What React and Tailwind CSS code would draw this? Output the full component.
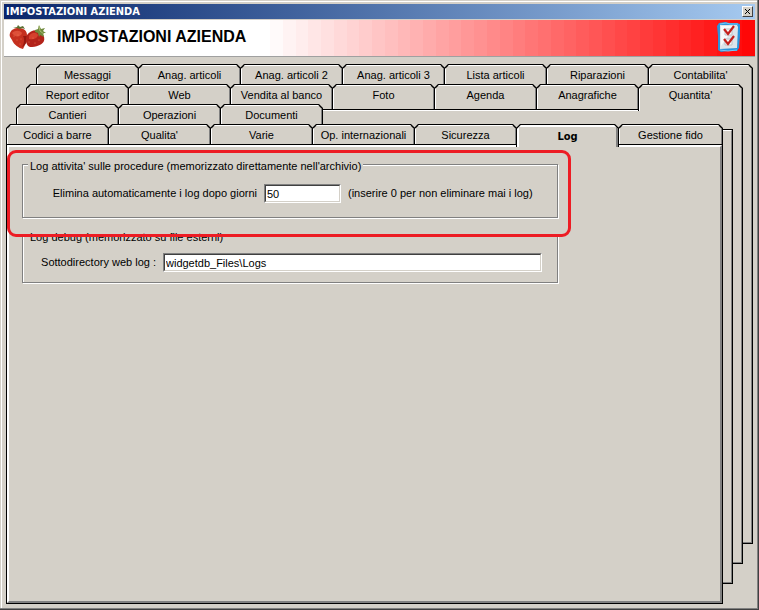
import React from "react";

const backTabs = [
  "Messaggi",
  "Anag. articoli",
  "Anag. articoli 2",
  "Anag. articoli 3",
  "Lista articoli",
  "Riparazioni",
  "Contabilita'",
];
const secondTabs = [
  "Report editor",
  "Web",
  "Vendita al banco",
  "Foto",
  "Agenda",
  "Anagrafiche",
  "Quantita'",
];
const thirdTabs = ["Cantieri", "Operazioni", "Documenti"];
const frontTabs = [
  "Codici a barre",
  "Qualita'",
  "Varie",
  "Op. internazionali",
  "Sicurezza",
  "Log",
  "Gestione fido",
];

const bands = Array.from({ length: 38 }, (_, i) =>
  Math.round(250 * (1 - i / 38))
);

const chamfer =
  "[clip-path:polygon(0_100%,0_4px,4px_0,calc(100%-4px)_0,100%_4px,100%_100%)]";

const boldFont = "font-['DejaVu_Sans_Condensed',Tahoma,sans-serif] font-bold";

function Tab({ label, active, open, grow, closed }) {
  return (
    <button
      type="button"
      role="tab"
      aria-selected={!!active}
      className={`${chamfer} flex bg-black px-px pt-px ${
        grow ? "min-w-0 grow" : "-mr-px w-[103px]"
      } ${active || open ? "z-10 -mb-[2px]" : ""} ${closed ? "pb-px" : ""}`}
    >
      <span
        className={`${chamfer} block w-full self-stretch whitespace-nowrap border-white border-r-[#808080] bg-[#d4d0c8] text-center leading-[16px] ${
          active
            ? `border-l-2 border-r-2 border-t-2 pt-[2px] ${boldFont}`
            : "border-l border-r border-t pt-px"
        }`}
      >
        {label}
      </span>
    </button>
  );
}

function TabRow({ tabs, className, openLast, closed }) {
  return (
    <div role="tablist" className={`flex ${className}`}>
      {tabs.map((label, i) => (
        <Tab
          key={label}
          label={label}
          active={label === "Log"}
          open={openLast && i === tabs.length - 1}
          grow={i === 6}
          closed={closed && label !== "Log"}
        />
      ))}
    </div>
  );
}

function BackPage() {
  return (
    <div className="grow border border-black bg-[#d4d0c8]">
      <div className="h-full border border-b-[#808080] border-l-white border-r-[#808080] border-t-white" />
    </div>
  );
}

function Strawberries() {
  return (
    <svg width="38" height="26" viewBox="0 0 38 26" aria-hidden="true">
      <path
        d="M1 9C2 6 5 4 10 4c5 0 8 3 8 7 0 6-2 10-4 14-4-1-9-4-11-9-2-3-3-4-2-7z"
        fill="#c5301f"
      />
      <path d="M3 9c3-3 8-3 10 0-1 4-7 5-10 0z" fill="#dd5039" />
      <path d="M14 12c2 3 1 8-1 11 3-1 6-6 6-11z" fill="#96190f" />
      <path
        d="M18 11c3-4 8-6 12-4 4 2 6 6 5 10-2 4-8 6-14 6-3-1-4-4-4-7 0-2 0-3 1-5z"
        fill="#b3231a"
      />
      <path d="M20 12c3-4 7-4 9-1-1 4-5 5-9 4z" fill="#d5402d" />
      <path d="M4 4l4-1 1-2 2 2 3-1 2 3-3-1-2 1-3-1z" fill="#5b6f33" />
      <path
        d="M26 6l3-1 1-4 2 4 4-1-2 3 3 2-3 0 1 4-4-2-1 2-1-4-3-1z"
        fill="#6f8a3e"
      />
      <path d="M30 2l1 5 4 3" stroke="#a9bd72" fill="none" />
      <g fill="#ee8058">
        <circle cx="5" cy="12" r=".5" />
        <circle cx="9" cy="11" r=".5" />
        <circle cx="8" cy="16" r=".5" />
        <circle cx="12" cy="15" r=".5" />
        <circle cx="11" cy="20" r=".5" />
        <circle cx="20" cy="18" r=".5" />
        <circle cx="24" cy="14" r=".5" />
        <circle cx="26" cy="19" r=".5" />
        <circle cx="30" cy="16" r=".5" />
      </g>
    </svg>
  );
}

function Checklist() {
  return (
    <svg width="26" height="32" viewBox="0 0 26 32" aria-hidden="true">
      <path
        d="M3 2l6-1 4 1h8l3 1v12l-1 12-2 3h-9l-7 1-3-2V15l-1-10z"
        fill="#2a94dc"
      />
      <path d="M4 3l6-1 4 1h8M4 29l8 1 9-1" stroke="#79c6f2" fill="none" />
      <path d="M4 4h17l1 2-1 21-17 1V15z" fill="#dde4ea" />
      <path d="M5 5h14L5 25z" fill="#f6f8fa" />
      <path d="M9 8h7v6H9zM9 18h7v6H9z" fill="#f7f7f7" stroke="#b9c0c6" />
      <path
        d="M8 8l4 5 6-8M8 18l4 5 6-8"
        fill="none"
        stroke="#c4201c"
        strokeWidth="2.2"
      />
    </svg>
  );
}

function Field({ id, value, className }) {
  return (
    <span
      className={`flex h-[19px] border border-b-white border-l-[#808080] border-r-white border-t-[#808080] ${className}`}
    >
      <input
        id={id}
        type="text"
        defaultValue={value}
        className="w-full min-w-0 border border-b-[#d4d0c8] border-l-[#404040] border-r-[#d4d0c8] border-t-[#404040] bg-white px-px pt-[2px] outline-none"
      />
    </span>
  );
}

function Group({ title, className, children }) {
  return (
    <fieldset
      className={`max-w-[536px] border border-[#808080] shadow-[inset_1px_1px_0_#fff,1px_1px_0_#fff] ${className}`}
    >
      <legend className="ml-[5px] bg-[#d4d0c8] px-[2px] pt-[3px] leading-[12px]">
        {title}
      </legend>
      {children}
    </fieldset>
  );
}

export default function App() {
  return (
    <div className="flex min-h-screen flex-col border-b border-r border-[#404040] bg-[#d4d0c8] font-['Liberation_Sans',Arial,sans-serif] text-[11px] text-black">
      <div className="flex grow flex-col border-b border-r border-[#808080] pl-px pt-px">
        <div className="flex grow flex-col border-l border-t border-white">
          <div className="mx-[2px] mt-[2px] flex h-[15px] items-center justify-between bg-linear-to-r from-[#0a246a] to-[#a6caf0] px-[2px]">
            <span className={`pt-px leading-[16px] text-white ${boldFont}`}>
              IMPOSTAZIONI AZIENDA
            </span>
            <button
              type="button"
              aria-label="Chiudi"
              className="flex h-[11px] w-[11px] items-center justify-center border border-b-[#404040] border-l-white border-r-[#404040] border-t-white bg-[#d4d0c8]"
            >
              <svg width="7" height="7" viewBox="0 0 7 7">
                <path d="M1 1l5 5M6 1L1 6" stroke="#000" />
              </svg>
            </button>
          </div>

          <header className="mx-[2px] mt-px flex h-[37px] border-b border-[#a0a0a0] bg-white">
            <div className="flex w-[266px] shrink-0 pl-[5px] pt-[4px]">
              <Strawberries />
              <h1 className="ml-[10px] whitespace-nowrap text-[16px] font-bold leading-[26px]">
                IMPOSTAZIONI AZIENDA
              </h1>
            </div>
            <div className="relative flex grow">
              {bands.map((c, i) => (
                <div
                  key={i}
                  className="grow"
                  style={{ backgroundColor: `rgb(255, ${c}, ${c})` }}
                />
              ))}
              <div className="absolute right-[13px] top-px">
                <Checklist />
              </div>
            </div>
          </header>

          <div className="mx-1 mb-1 mt-[7px] grid grow">
            <div className="col-start-1 row-start-1 mb-[60px] ml-[30px] flex flex-col">
              <TabRow tabs={backTabs} className="h-[25px]" openLast />
              <BackPage />
            </div>
            <div className="col-start-1 row-start-1 mb-[40px] ml-[20px] mr-[10px] mt-[20px] flex flex-col">
              <TabRow tabs={secondTabs} className="h-[25px]" openLast />
              <BackPage />
            </div>
            <div className="col-start-1 row-start-1 mb-[20px] ml-[10px] mr-[20px] mt-[40px] flex flex-col">
              <TabRow tabs={thirdTabs} className="h-[25px]" />
              <BackPage />
            </div>
            <div className="col-start-1 row-start-1 mr-[30px] mt-[60px] flex flex-col">
              <TabRow tabs={frontTabs} className="h-[21px]" closed />
              <div className="flex grow flex-col border-x border-b border-black bg-[#d4d0c8]">
                <div className="relative grow border-2 border-b-[#808080] border-l-white border-r-[#808080] border-t-white px-[13px] pt-[10px]">
                  <Group
                    title="Log attivita' sulle procedure (memorizzato direttamente nell'archivio)"
                    className="pb-[14px]"
                  >
                    <div className="flex items-center gap-[7px] whitespace-nowrap pt-3">
                      <label htmlFor="giorni" className="w-[234px] text-right">
                        Elimina automaticamente i log dopo giorni
                      </label>
                      <Field id="giorni" value="50" className="w-[77px]" />
                      <span>(inserire 0 per non eliminare mai i log)</span>
                    </div>
                  </Group>
                  <Group
                    title="Log debug (memorizzato su file esterni)"
                    className="mt-[10px] pb-[10px]"
                  >
                    <div className="flex items-center gap-[7px] whitespace-nowrap pr-[15px] pt-[10px]">
                      <label htmlFor="weblog" className="w-[133px] text-right">
                        Sottodirectory web log :
                      </label>
                      <Field
                        id="weblog"
                        value="widgetdb_Files\Logs"
                        className="grow"
                      />
                    </div>
                  </Group>
                  {/* highlight around the first group */}
                  <div className="pointer-events-none absolute -left-[2px] top-[3px] h-[87px] w-full max-w-[564px] rounded-[9px] border-3 border-[#ed1c24]" />
                </div>
              </div>
            </div>
          </div>
        </div>
      </div>
    </div>
  );
}
